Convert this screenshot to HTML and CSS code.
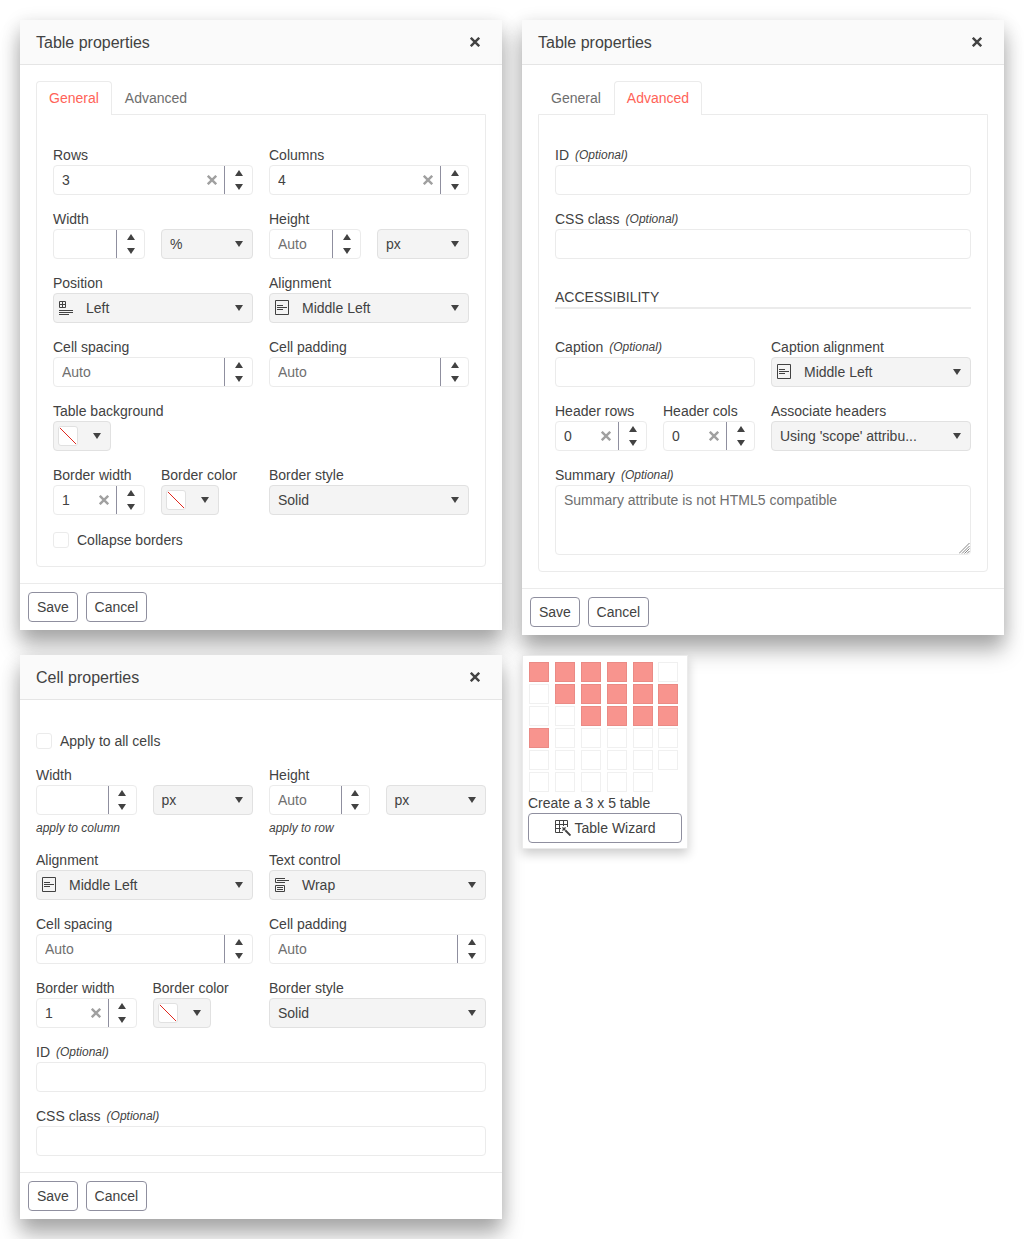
FILE: index.html
```html
<!DOCTYPE html>
<html lang="en">
<head>
<meta charset="utf-8">
<title>Table properties</title>
<link rel="stylesheet" href="styles.css">
</head>
<body>
<svg class="sprite" width="0" height="0" aria-hidden="true">
  <symbol id="x" viewBox="0 0 10 10"><path d="M.8.800l8.400 8.400M9.200.800l-8.400 8.400" fill="none" stroke="currentColor" stroke-width="2.4"/></symbol>
  <symbol id="up" viewBox="0 0 8 6"><path d="M0 6L4 0l4 6z" fill="currentColor"/></symbol>
  <symbol id="down" viewBox="0 0 8 6"><path d="M0 0h8L4 6z" fill="currentColor"/></symbol>
  <symbol id="align" viewBox="0 0 16 16"><path d="M.5.500h13v14H.5zM2 5.500h6M2 7.500h10M2 9.500h6" fill="none" stroke="currentColor"/></symbol>
  <symbol id="position" viewBox="0 0 16 16"><path d="M.5 1.500h6v6h-6zM3.500 1.500v6M.5 4.500h6M0 10.500h14M0 12.500h14M0 14.500h10" fill="none" stroke="currentColor"/></symbol>
  <symbol id="wrap" viewBox="0 0 16 16"><path d="M10 1.500H.5v4H10M2 3.500h12M.5 8.500h9v6h-9zM2 10.500h6M2 12.500h6" fill="none" stroke="currentColor"/></symbol>
  <symbol id="wizard" viewBox="0 0 16 16"><path d="M12.500 7V.5H.5v12H8M4.500 0v12.500M8.500 0v6M0 4.500h13M0 8.500h6" fill="none" stroke="currentColor"/><path d="M10.500 10.500l5 5" fill="none" stroke="currentColor" stroke-width="1.900"/><path d="M7 7l2 .8L11 7l-.8 2 .8 2-2-.8L7 11l.8-2z" fill="currentColor"/></symbol>
</svg>
<main class="board">
  <div class="column column-left">
    <section class="window">
      <header class="titlebar"><span>Table properties</span><svg class="close"><use href="#x"/></svg></header>
      <div class="window-body">
        <div class="tabs"><span class="tab active">General</span><span class="tab">Advanced</span></div>
        <div class="panel">
          <div class="row">
            <div class="field"><label>Rows</label><div class="numeric"><input value="3"><svg class="clear"><use href="#x"/></svg><span class="spin"><svg><use href="#up"/></svg><svg><use href="#down"/></svg></span></div></div>
            <div class="field"><label>Columns</label><div class="numeric"><input value="4"><svg class="clear"><use href="#x"/></svg><span class="spin"><svg><use href="#up"/></svg><svg><use href="#down"/></svg></span></div></div>
          </div>
          <div class="row">
            <div class="field"><label>Width</label><div class="row"><div class="numeric"><input><span class="spin"><svg><use href="#up"/></svg><svg><use href="#down"/></svg></span></div><div class="select"><span>%</span><svg class="caret"><use href="#down"/></svg></div></div></div>
            <div class="field"><label>Height</label><div class="row"><div class="numeric"><input placeholder="Auto"><span class="spin"><svg><use href="#up"/></svg><svg><use href="#down"/></svg></span></div><div class="select"><span>px</span><svg class="caret"><use href="#down"/></svg></div></div></div>
          </div>
          <div class="row">
            <div class="field"><label>Position</label><div class="select with-icon"><svg class="icon"><use href="#position"/></svg><span>Left</span><svg class="caret"><use href="#down"/></svg></div></div>
            <div class="field"><label>Alignment</label><div class="select with-icon"><svg class="icon"><use href="#align"/></svg><span>Middle Left</span><svg class="caret"><use href="#down"/></svg></div></div>
          </div>
          <div class="row">
            <div class="field"><label>Cell spacing</label><div class="numeric"><input placeholder="Auto"><span class="spin"><svg><use href="#up"/></svg><svg><use href="#down"/></svg></span></div></div>
            <div class="field"><label>Cell padding</label><div class="numeric"><input placeholder="Auto"><span class="spin"><svg><use href="#up"/></svg><svg><use href="#down"/></svg></span></div></div>
          </div>
          <div class="field"><label>Table background</label><div class="select color"><svg class="swatch" viewBox="0 0 18 18"><path d="M1 1l16 16"/></svg><svg class="caret"><use href="#down"/></svg></div></div>
          <div class="row">
            <div class="row">
              <div class="field"><label>Border width</label><div class="numeric"><input value="1"><svg class="clear"><use href="#x"/></svg><span class="spin"><svg><use href="#up"/></svg><svg><use href="#down"/></svg></span></div></div>
              <div class="field"><label>Border color</label><div class="select color"><svg class="swatch" viewBox="0 0 18 18"><path d="M1 1l16 16"/></svg><svg class="caret"><use href="#down"/></svg></div></div>
            </div>
            <div class="field"><label>Border style</label><div class="select"><span>Solid</span><svg class="caret"><use href="#down"/></svg></div></div>
          </div>
          <div class="check push"><span class="box"></span>Collapse borders</div>
        </div>
      </div>
      <footer class="actions"><button>Save</button><button>Cancel</button></footer>
    </section>

    <section class="window">
      <header class="titlebar"><span>Cell properties</span><svg class="close"><use href="#x"/></svg></header>
      <div class="window-body form">
        <div class="check push-wide"><span class="box"></span>Apply to all cells</div>
        <div class="row">
          <div class="field"><label>Width</label><div class="row"><div class="numeric"><input><span class="spin"><svg><use href="#up"/></svg><svg><use href="#down"/></svg></span></div><div class="select"><span>px</span><svg class="caret"><use href="#down"/></svg></div></div><em class="hint">apply to column</em></div>
          <div class="field"><label>Height</label><div class="row"><div class="numeric"><input placeholder="Auto"><span class="spin"><svg><use href="#up"/></svg><svg><use href="#down"/></svg></span></div><div class="select"><span>px</span><svg class="caret"><use href="#down"/></svg></div></div><em class="hint">apply to row</em></div>
        </div>
        <div class="row">
          <div class="field"><label>Alignment</label><div class="select with-icon"><svg class="icon"><use href="#align"/></svg><span>Middle Left</span><svg class="caret"><use href="#down"/></svg></div></div>
          <div class="field"><label>Text control</label><div class="select with-icon"><svg class="icon"><use href="#wrap"/></svg><span>Wrap</span><svg class="caret"><use href="#down"/></svg></div></div>
        </div>
        <div class="row">
          <div class="field"><label>Cell spacing</label><div class="numeric"><input placeholder="Auto"><span class="spin"><svg><use href="#up"/></svg><svg><use href="#down"/></svg></span></div></div>
          <div class="field"><label>Cell padding</label><div class="numeric"><input placeholder="Auto"><span class="spin"><svg><use href="#up"/></svg><svg><use href="#down"/></svg></span></div></div>
        </div>
        <div class="row">
          <div class="row">
            <div class="field"><label>Border width</label><div class="numeric"><input value="1"><svg class="clear"><use href="#x"/></svg><span class="spin"><svg><use href="#up"/></svg><svg><use href="#down"/></svg></span></div></div>
            <div class="field"><label>Border color</label><div class="select color"><svg class="swatch" viewBox="0 0 18 18"><path d="M1 1l16 16"/></svg><svg class="caret"><use href="#down"/></svg></div></div>
          </div>
          <div class="field"><label>Border style</label><div class="select"><span>Solid</span><svg class="caret"><use href="#down"/></svg></div></div>
        </div>
        <div class="field"><label>ID <em>(Optional)</em></label><input class="text"></div>
        <div class="field"><label>CSS class <em>(Optional)</em></label><input class="text"></div>
      </div>
      <footer class="actions"><button>Save</button><button>Cancel</button></footer>
    </section>
  </div>

  <div class="column column-right">
    <section class="window">
      <header class="titlebar"><span>Table properties</span><svg class="close"><use href="#x"/></svg></header>
      <div class="window-body">
        <div class="tabs"><span class="tab">General</span><span class="tab active">Advanced</span></div>
        <div class="panel">
          <div class="field"><label>ID <em>(Optional)</em></label><input class="text"></div>
          <div class="field"><label>CSS class <em>(Optional)</em></label><input class="text"></div>
          <h3 class="legend">ACCESSIBILITY</h3>
          <div class="row">
            <div class="field"><label>Caption <em>(Optional)</em></label><input class="text"></div>
            <div class="field"><label>Caption alignment</label><div class="select with-icon"><svg class="icon"><use href="#align"/></svg><span>Middle Left</span><svg class="caret"><use href="#down"/></svg></div></div>
          </div>
          <div class="row">
            <div class="row">
              <div class="field"><label>Header rows</label><div class="numeric"><input value="0"><svg class="clear"><use href="#x"/></svg><span class="spin"><svg><use href="#up"/></svg><svg><use href="#down"/></svg></span></div></div>
              <div class="field"><label>Header cols</label><div class="numeric"><input value="0"><svg class="clear"><use href="#x"/></svg><span class="spin"><svg><use href="#up"/></svg><svg><use href="#down"/></svg></span></div></div>
            </div>
            <div class="field"><label>Associate headers</label><div class="select"><span>Using 'scope' attribu...</span><svg class="caret"><use href="#down"/></svg></div></div>
          </div>
          <div class="field summary"><label>Summary <em>(Optional)</em></label><textarea placeholder="Summary attribute is not HTML5 compatible"></textarea><svg class="grip" viewBox="0 0 11 11"><path d="M0 10.500L10.500 0M3 10.500L10.500 3M5.500 10.500l5-5M8 10.500l2.500-2.500"/></svg></div>
        </div>
      </div>
      <footer class="actions"><button>Save</button><button>Cancel</button></footer>
    </section>

    <section class="popup">
      <div class="cells">
        <i class="on"></i><i class="on"></i><i class="on"></i><i class="on"></i><i class="on"></i><i></i>
        <i></i><i class="on"></i><i class="on"></i><i class="on"></i><i class="on"></i><i class="on"></i>
        <i></i><i></i><i class="on"></i><i class="on"></i><i class="on"></i><i class="on"></i>
        <i class="on"></i><i></i><i></i><i></i><i></i><i></i>
        <i></i><i></i><i></i><i></i><i></i><i></i>
        <i></i><i></i><i></i><i></i><i></i>
      </div>
      <div class="status">Create a 3 x 5 table</div>
      <button class="wizard"><svg class="icon"><use href="#wizard"/></svg>Table Wizard</button>
    </section>
  </div>
</main>
</body>
</html>
```
FILE: styles.css
```css
* { box-sizing: border-box; }
body {
  margin: 0;
  background: #fff;
  color: #424242;
  font: 14px/20px "Liberation Sans", Arial, sans-serif;
  overflow: hidden;
}
svg { display: block; flex: none; }
.sprite { position: absolute; }
input, textarea, button { font: inherit; color: inherit; }
.board { display: flex; gap: 20px; padding: 20px; height: 1239px; }
.column { display: flex; flex-direction: column; align-items: flex-start; width: 482px; }
.column-left { gap: 25px; }
.column-right { gap: 20px; }

.window {
  width: 100%;
  background: #fff;
  box-shadow: 0 16px 20px rgba(0, 0, 0, .28), 0 4px 18px rgba(0, 0, 0, .14);
}
.titlebar {
  display: flex;
  align-items: center;
  justify-content: space-between;
  height: 45px;
  padding: 0 22px 0 16px;
  border-bottom: 1px solid #e5e5e5;
  background: #fafafa;
  font-size: 16px;
}
.titlebar span { padding-top: 2px; }
.close { width: 10px; height: 10px; }
.close, .clear, .close *, .clear * { overflow: visible; }
.window-body { padding: 16px; }
.actions { display: flex; gap: 7.7px; padding: 8px; border-top: 1px solid #ebebeb; }
button {
  height: 30px;
  padding: 0 8px;
  border: 1px solid #8f8f9f;
  border-radius: 4px;
  background: #fff;
}

.tabs { display: flex; }
.tab {
  height: 34px;
  margin-bottom: -1px;
  padding: 6px 12px;
  border: 1px solid transparent;
  border-bottom: 0;
  color: #6e6e6e;
}
.tab.active {
  position: relative;
  border-color: #ebebeb;
  border-radius: 4px 4px 0 0;
  background: #fff;
  color: #ff6358;
}
.panel {
  display: flex;
  flex-direction: column;
  gap: 14px;
  padding: 30px 16px 16px;
  border: 1px solid #ebebeb;
  border-radius: 0 0 4px 4px;
}
.form { display: flex; flex-direction: column; gap: 14px; }
.row { display: grid; grid-template-columns: repeat(2, minmax(0, 1fr)); gap: 16px; }
.field > label { display: flex; gap: 6px; height: 20px; white-space: nowrap; }
em { font-size: 12px; }
.hint { display: block; height: 21px; padding-top: 3px; }

.numeric, .select, .text, textarea {
  width: 100%;
  height: 30px;
  border: 1px solid #ebebeb;
  border-radius: 4px;
  background: #fff;
}
.numeric { display: flex; align-items: center; }
.numeric input { flex: 1 1 0; width: 0; min-width: 0; height: 28px; padding: 0 0 0 8px; border: 0; background: none; }
.clear { width: 10px; height: 10px; margin-right: 7px; color: #a0a0a0; }
.spin {
  display: flex;
  flex: none;
  flex-direction: column;
  align-items: center;
  justify-content: center;
  gap: 8px;
  width: 28px;
  height: 28px;
  border-left: 1px solid #8f8f9f;
}
.spin svg, .caret { width: 8px; height: 6px; }
.select {
  display: flex;
  align-items: center;
  justify-content: space-between;
  padding: 0 9px 0 8px;
  border-color: #e1e1e1;
  background: #f4f4f4;
}
.with-icon { justify-content: flex-start; padding-left: 5px; }
.with-icon .caret { margin-left: auto; }
.icon { width: 16px; height: 16px; }
.with-icon .icon { margin-right: 11px; }
.select.color { width: 58px; padding-left: 4px; }
.swatch { width: 20px; height: 20px; border: 1px solid #e1e1e1; border-radius: 3px; background: #fff; }
.swatch path { stroke: #e0281e; fill: none; }
.text { display: block; }
textarea { display: block; height: 70px; padding: 4px 8px; resize: none; }
.summary { position: relative; }
.grip { position: absolute; right: 1px; bottom: 1px; width: 11px; height: 11px; fill: none; stroke: #777; stroke-width: .9; }
::placeholder { color: #6f6f6f; opacity: 1; }

.check { display: flex; align-items: center; gap: 8px; height: 20px; }
.push { margin-top: 1px; }
.push-wide { margin-top: 15px; }
.box { width: 16px; height: 16px; border: 1px solid #ebebeb; border-radius: 3px; }
.legend { height: 22px; margin: 14px 0; border-bottom: 2px solid #ebebeb; font-size: 14px; font-weight: 400; }

.popup {
  width: 166px;
  height: 194px;
  padding: 6px 5px 5px;
  border: 1px solid #ebebeb;
  background: #fff;
  box-shadow: 0 5px 10px rgba(0, 0, 0, .2);
}
.cells { display: grid; grid-template-columns: repeat(6, 20px); gap: 2px 5.89px; padding-left: 1px; }
.cells i { height: 20px; border: 1px solid #f0f0f0; }
.cells .on { border-color: #ea8a85; background: #f8948e; }
.status { margin-top: 1px; height: 20px; }
.wizard { display: flex; align-items: center; justify-content: center; gap: 4px; width: 100%; }
```
